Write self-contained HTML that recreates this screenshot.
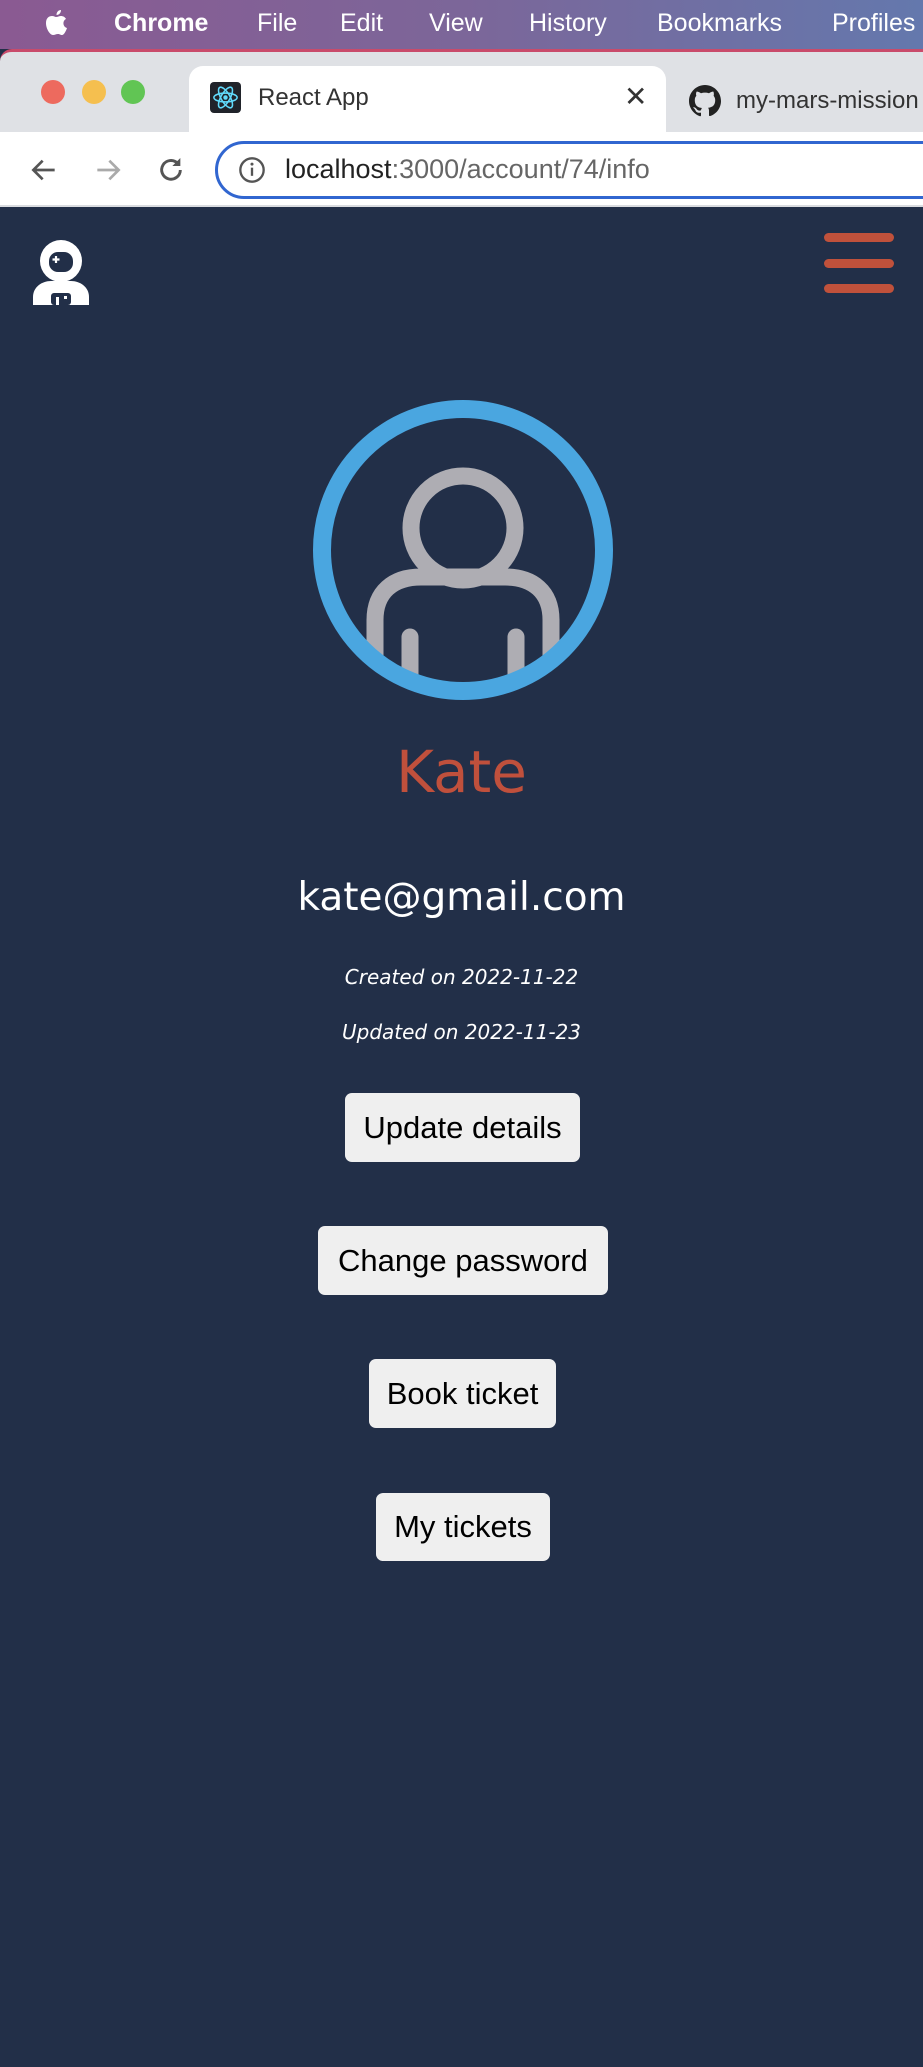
<!DOCTYPE html>
<html><head><meta charset="utf-8">
<style>
*{margin:0;padding:0;box-sizing:border-box}
html,body{width:923px;height:2067px;overflow:hidden;background:#222f48;font-family:"Liberation Sans",sans-serif}
.menubar{position:absolute;left:0;top:0;width:923px;height:49px;background:linear-gradient(90deg,#8a5a92,#7c6699 50%,#6478ad);color:#fff;font-size:25px}
.menubar span{position:absolute;top:9px}
.tabs{position:absolute;left:0;top:49px;width:923px;height:84px;background:#dfe1e5;border-top:3px solid #c94b6b;border-radius:12px 0 0 0}
.dot{position:absolute;top:80px;width:24px;height:24px;border-radius:50%}
.tab{position:absolute;left:189px;top:66px;width:477px;height:67px;background:#fff;border-radius:14px 14px 0 0}
.toolbar{position:absolute;left:0;top:132px;width:923px;height:75px;background:#fff;border-bottom:2px solid #dadce0}
.omni{position:absolute;left:215px;top:141px;width:760px;height:58px;border:3px solid #3166d0;border-radius:29px}
.page{position:absolute;left:0;top:207px;width:923px;height:1860px;background:#222f48}
.ham{position:absolute;left:824px;width:70px;height:9px;border-radius:5px;background:#c0513b}
.c{position:absolute;left:0;width:923px;text-align:center}
.btn{position:absolute;background:#efefef;border-radius:7px;color:#000;font-size:31px;text-align:center}
</style></head><body>
<div class="menubar">
<svg style="position:absolute;left:44px;top:8px" width="24" height="30" viewBox="0 0 24 30"><path d="M17 2c0 3-2 5-4.5 5 0-3 2-5 4.5-5zM12 9c2 0 3-1 5-1 2 0 4 1 5 3-4 2-3 8 1 9-1 3-3 7-5 7-2 0-2-1-4-1s-3 1-5 1c-3 0-7-6-7-12 0-5 3-7 6-7 2 0 3 1 4 1z" fill="#fff"/></svg>
<span style="left:114px;font-weight:bold">Chrome</span>
<span style="left:257px">File</span>
<span style="left:340px">Edit</span>
<span style="left:429px">View</span>
<span style="left:529px">History</span>
<span style="left:657px">Bookmarks</span>
<span style="left:832px">Profiles</span>
</div>
<div class="tabs"></div>
<div class="dot" style="left:41px;background:#ed6a5e"></div>
<div class="dot" style="left:82px;background:#f5bf4f"></div>
<div class="dot" style="left:121px;background:#61c554"></div>
<div class="tab">
<div style="position:absolute;left:21px;top:16px;width:31px;height:31px;background:#20232a;border-radius:4px"></div>
<svg style="position:absolute;left:21px;top:16px" width="31" height="31" viewBox="-16 -16 32 32"><g fill="none" stroke="#61dafb" stroke-width="1.6"><ellipse rx="12" ry="4.6"/><ellipse rx="12" ry="4.6" transform="rotate(60)"/><ellipse rx="12" ry="4.6" transform="rotate(120)"/></g><circle r="2.3" fill="#61dafb"/></svg>
<div style="position:absolute;left:69px;top:18px;font-size:24px;color:#333">React App</div>
<div style="position:absolute;left:435px;top:14px;font-size:28px;color:#333">✕</div>
</div>
<svg style="position:absolute;left:689px;top:85px" width="32" height="32" viewBox="0 0 16 16"><path fill="#222" d="M8 0C3.6 0 0 3.6 0 8c0 3.5 2.3 6.5 5.5 7.600.4.1.5-.2.5-.4v-1.4c-2.200.5-2.7-1-2.7-1-.4-.9-.9-1.2-.9-1.2-.7-.5.1-.5.1-.5.8.1 1.2.8 1.2.8.7 1.2 1.9.9 2.3.7.1-.5.3-.9.5-1.100-1.800-.2-3.600-.9-3.600-4 0-.9.3-1.6.8-2.100-.1-.2-.4-1 .1-2.100 0 0 .7-.2 2.200.8.6-.2 1.300-.3 2-.3s1.400.1 2 .3c1.500-1 2.200-.8 2.200-.8.4 1.100.2 1.900.1 2.100.5.6.8 1.300.8 2.100 0 3.100-1.900 3.700-3.600 3.900.3.3.5.8.5 1.500v2.200c0 .2.1.5.6.4C13.700 14.500 16 11.500 16 8c0-4.400-3.600-8-8-8z"/></svg>
<div style="position:absolute;left:736px;top:87px;font-size:24px;color:#333;white-space:nowrap">my-mars-mission</div>
<div class="toolbar"></div>
<svg style="position:absolute;left:28px;top:154px" width="32" height="32" viewBox="0 0 24 24"><path d="M20 12H5M11 5l-7 7 7 7" fill="none" stroke="#555" stroke-width="2"/></svg>
<svg style="position:absolute;left:92px;top:154px" width="32" height="32" viewBox="0 0 24 24"><path d="M4 12h15M13 5l7 7-7 7" fill="none" stroke="#aaa" stroke-width="2"/></svg>
<svg style="position:absolute;left:155px;top:154px" width="32" height="32" viewBox="0 0 24 24"><path d="M19 12a7 7 0 1 1-2-5" fill="none" stroke="#555" stroke-width="2.2"/><path d="M19 3v6h-6z" fill="#555"/></svg>
<div class="omni"></div>
<svg style="position:absolute;left:238px;top:156px" width="28" height="28" viewBox="0 0 24 24"><circle cx="12" cy="12" r="10" fill="none" stroke="#555" stroke-width="2"/><path d="M12 10v7" stroke="#555" stroke-width="2"/><circle cx="12" cy="7" r="1.3" fill="#555"/></svg>
<div style="position:absolute;left:285px;top:154px;font-size:27px;color:#222;white-space:nowrap">localhost<span style="color:#666">:3000/account/74/info</span></div>
<div class="page"></div>
<svg style="position:absolute;left:32px;top:239px" width="58" height="66" viewBox="0 0 58 66"><circle cx="29" cy="22" r="21" fill="#fff"/><rect x="17" y="13" width="24" height="20" rx="9" fill="#222f48"/><path d="M24 17v7M20.5 20.5h7" stroke="#fff" stroke-width="2.2"/><path d="M1 66v-8c0-10 9-16 18-16h20c9 0 18 6 18 16v8z" fill="#fff"/><rect x="19" y="54" width="20" height="12" rx="3" fill="#222f48"/><rect x="24" y="58" width="3" height="8" fill="#fff"/><rect x="32" y="57" width="3" height="3" fill="#fff"/></svg>
<div class="ham" style="top:233px"></div>
<div class="ham" style="top:259px"></div>
<div class="ham" style="top:284px"></div>
<svg style="position:absolute;left:308px;top:395px" width="310" height="310" viewBox="0 0 310 310"><defs><clipPath id="cp"><circle cx="155" cy="155" r="139"/></clipPath></defs><g clip-path="url(#cp)" fill="none" stroke="#aeadb3" stroke-width="17"><circle cx="155" cy="133" r="52"/><path d="M67 300v-75c0-28 18-43 46-43h84c28 0 46 15 46 43v75"/><path d="M102 242v60M208 242v60" stroke-linecap="round"/></g><circle cx="155" cy="155" r="141" fill="none" stroke="#4aa6e0" stroke-width="18"/></svg>
<div class="c" style="top:738px;font-family:'DejaVu Sans',sans-serif;font-size:58px;color:#c0503c">Kate</div>
<div class="c" style="top:875px;font-family:'DejaVu Sans',sans-serif;font-size:39px;color:#fff">kate@gmail.com</div>
<div class="c" style="top:965px;font-family:'DejaVu Sans',sans-serif;font-size:20px;font-style:italic;color:#fff">Created on 2022-11-22</div>
<div class="c" style="top:1020px;font-family:'DejaVu Sans',sans-serif;font-size:20px;font-style:italic;color:#fff">Updated on 2022-11-23</div>
<div class="btn" style="left:345px;top:1093px;width:235px;height:69px;line-height:69px">Update details</div>
<div class="btn" style="left:318px;top:1226px;width:290px;height:69px;line-height:69px">Change password</div>
<div class="btn" style="left:369px;top:1359px;width:187px;height:69px;line-height:69px">Book ticket</div>
<div class="btn" style="left:376px;top:1493px;width:174px;height:68px;line-height:68px">My tickets</div>
</body></html>
